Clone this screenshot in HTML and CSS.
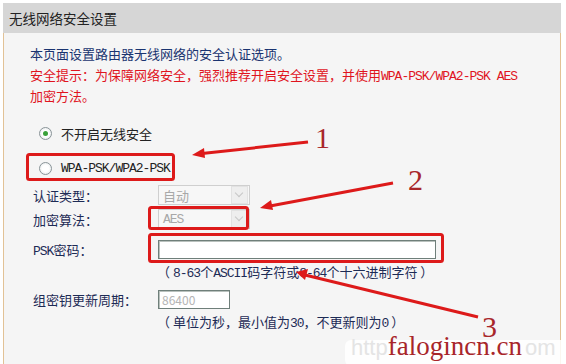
FILE: index.html
```html
<!DOCTYPE html>
<html lang="zh-CN">
<head>
<meta charset="UTF-8" />
<title>无线网络安全设置</title>
<link rel="stylesheet" href="styles.css">
</head>
<body>
  <div class="panel">
    <div class="panel-title">无线网络安全设置</div>
    <div class="panel-body">
      <p class="intro">本页面设置路由器无线网络的安全认证选项。</p>
      <p class="warn">安全提示：为保障网络安全，强烈推荐开启安全设置，并使用<span class="mono">WPA-PSK/WPA2-PSK AES</span><br>加密方法。</p>

      <div class="radio-row first">
        <span class="radio checked"></span>
        <span>不开启无线安全</span>
      </div>
      <div class="radio-row">
        <span class="radio"></span>
        <span class="mono">WPA-PSK/WPA2-PSK</span>
      </div>

      <div class="form-row">
        <span class="label">认证类型：</span>
        <div class="select"><span>自动</span><i class="drop"></i></div>
      </div>
      <div class="form-row">
        <span class="label">加密算法：</span>
        <div class="select"><span class="mono">AES</span><i class="drop"></i></div>
      </div>
      <div class="form-row psk">
        <span class="label"><span class="mono">PSK</span>密码：</span>
        <div class="input wide"></div>
      </div>
      <div class="hint">（ <span class="mono">8-63</span>个<span class="mono">ASCII</span>码字符或<span class="mono">8-64</span>个十六进制字符 ）</div>
      <div class="form-row period">
        <span class="label">组密钥更新周期：</span>
        <div class="input short">86400</div>
      </div>
      <div class="hint">（ 单位为秒，最小值为<span class="mono">30</span>，不更新则为<span class="mono">0</span> ）</div>
    </div>
  </div>

  <svg class="marks" width="566" height="364" viewBox="0 0 566 364">
    <g fill="none" stroke="#dd1a1a" stroke-width="3">
      <rect x="27.5" y="154.5" width="146" height="25" rx="2" />
      <rect x="149.5" y="207.5" width="98" height="21" rx="2" />
      <rect x="149.5" y="234.5" width="293" height="27" rx="2" />
      <line x1="308" y1="142" x2="202" y2="153.5" />
      <line x1="393" y1="183" x2="270" y2="206" />
      <line x1="478" y1="317" x2="305" y2="275" />
    </g>
    <g fill="#dd1a1a">
      <polygon points="192,155 204,148 205,158" />
      <polygon points="260,208 271,200 273,210" />
      <polygon points="296,272 308,269 305,280" />
    </g>
    <g class="num">
      <text x="315" y="148">1</text>
      <text x="408" y="190">2</text>
      <text x="482" y="337">3</text>
    </g>
  </svg>

  <div class="stamp">
    <span class="faint">http</span><span class="site">falogincn.cn</span><span class="faint tail">om</span>
  </div>
</body>
</html>
```

FILE: styles.css
```css
body {
  margin: 0;
  background: #fff;
  font-family: "Noto Sans CJK SC", "DejaVu Sans", sans-serif;
  font-size: 13px;
  color: #1d2b55;
  width: 566px;
  height: 364px;
  overflow: hidden;
  position: relative;
}
.mono {
  font-family: "Liberation Mono", "DejaVu Sans Mono", monospace;
  font-size: 13px;
  letter-spacing: -1px;
  line-height: 1;
}
.panel {
  margin: 3px 0 0 3px;
  width: 558px;
  height: 361px;
  display: flex;
  flex-direction: column;
}
.panel-title {
  height: 30px;
  line-height: 31px;
  background: #d6d6d6;
  padding-left: 6px;
  font-size: 13.5px;
  color: #222;
}
.panel-body {
  flex: 1;
  background: #f5f5f5;
  border-left: 1px solid #e2c296;
  border-right: 1px solid #e2c296;
  padding: 10px 0 0 26px;
}
.intro, .warn {
  margin: 0;
  line-height: 21px;
}
.intro {
  color: #1a3470;
}
.warn {
  color: #e0141e;
}
.radio-row {
  display: flex;
  align-items: center;
  gap: 9px;
  height: 22px;
  margin: 13px 0 0 9px;
  color: #222;
}
.radio-row.first {
  margin-top: 16px;
}
.radio {
  width: 11px;
  height: 11px;
  border: 1px solid #8a9498;
  border-radius: 50%;
  background: radial-gradient(circle, #fff 40%, #dfe4e6);
  display: flex;
  align-items: center;
  justify-content: center;
}
.radio.checked::after {
  content: "";
  width: 5px;
  height: 5px;
  border-radius: 50%;
  background: #3aa13a;
}
.form-row {
  display: flex;
  align-items: center;
  height: 24px;
}
.radio-row + .form-row {
  margin-top: 4px;
}
.form-row.psk {
  margin-top: 6px;
}
.form-row.period {
  margin-top: 4px;
}
.label {
  width: 125px;
  padding-left: 3px;
  color: #1d2b55;
}
.select {
  width: 86px;
  height: 18px;
  border: 1px solid #cfcfcf;
  background: #f7f7f7;
  display: flex;
  align-items: center;
  justify-content: space-between;
  padding-left: 4px;
  color: #a8a8a8;
}
.drop {
  width: 15px;
  height: 16px;
  margin-right: 1px;
  border: 1px solid #e2e2e2;
  background: #eeeeee;
  position: relative;
}
.drop::after {
  content: "";
  position: absolute;
  left: 4px;
  top: 3px;
  width: 5px;
  height: 5px;
  border-right: 1.5px solid #c6c6c6;
  border-bottom: 1.5px solid #c6c6c6;
  transform: rotate(45deg);
}
.input {
  height: 17px;
  border: 1px solid #6f7f7a;
  background: #fff;
  box-shadow: inset 1px 1px 0 #b9c1bd;
}
.input.wide {
  width: 276px;
}
.input.short {
  width: 67px;
  padding-left: 3px;
  line-height: 17px;
  color: #b5b5b5;
  font-size: 12px;
}
.hint {
  height: 22px;
  line-height: 22px;
  padding-left: 127px;
  font-size: 13px;
  color: #1d2b55;
}
.marks {
  position: absolute;
  left: 0;
  top: 0;
}
.num text {
  font-family: "Liberation Serif", "DejaVu Serif", serif;
  font-size: 30px;
  fill: #a8262a;
}
.stamp {
  position: absolute;
  left: 345px;
  top: 340px;
  width: 230px;
  height: 26px;
  padding-left: 6px;
  background: rgba(255, 255, 255, 0.85);
  border-radius: 6px;
  line-height: 12px;
  font-family: "Liberation Serif", "DejaVu Serif", serif;
  white-space: nowrap;
}
.faint {
  color: #e4e4e4;
  font-size: 22px;
  font-family: "Liberation Sans", sans-serif;
}
.site {
  color: #a8262a;
  font-size: 27px;
}
.faint.tail {
  margin-left: 3px;
}
```
